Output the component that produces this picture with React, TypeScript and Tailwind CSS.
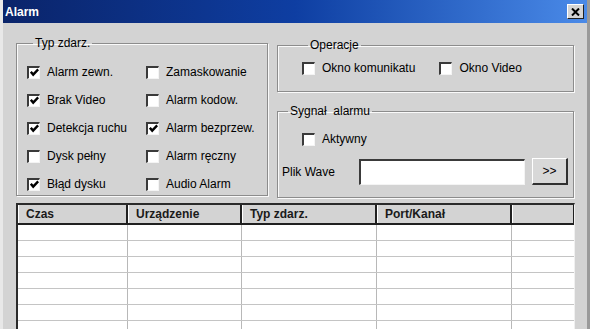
import React from 'react';

const font = { fontFamily: '"Liberation Sans", Arial, sans-serif' };

function Check({ on }: { on?: boolean }) {
  return (
    <span className="w-[13px] h-[13px] shrink-0 bg-white border-t-2 border-l-2 border-b border-r border-t-[#3a3a3a] border-l-[#3a3a3a] border-b-[#f4f4f4] border-r-[#f4f4f4] flex items-center justify-center">
      {on && (
        <svg width="9" height="9" viewBox="0 0 9 9">
          <polyline points="0.8,3.8 3.2,6.6 8.2,1.4" fill="none" stroke="#000" strokeWidth="2.4" />
        </svg>
      )}
    </span>
  );
}

function Item({ label, on }: { label: string; on?: boolean }) {
  return (
    <div className="flex items-center gap-[7px] h-[14px] leading-[14px] whitespace-nowrap">
      <Check on={on} />
      <span>{label}</span>
    </div>
  );
}

function Group({ title, className, children }: { title: string; className: string; children: React.ReactNode }) {
  return (
    <fieldset className={`border border-[#8c8c8c] shadow-[inset_1px_1px_0_#fafafa,1px_1px_0_#fafafa] ${className}`}>
      <legend className="ml-[6px] px-[2px] leading-[14px] whitespace-pre">{title}</legend>
      {children}
    </fieldset>
  );
}

const cols = [112, 114, 135, 135, 63];
const heads = ['Czas', 'Urządzenie', 'Typ zdarz.', 'Port/Kanał', ''];

export default function App() {
  return (
    <div style={font} className="w-[590px] h-[329px] overflow-hidden bg-[#d3d3d3] text-[12px] text-black border-l-[3px] border-r-[3px] border-l-[#e8e8e8] border-r-[#9a9a9a] flex flex-col">
      <div className="h-[23px] shrink-0 bg-gradient-to-r from-[#0a246a] via-[#0e3ea2] to-[#4a8ae8] flex items-center justify-between pl-[2px] pr-[3px]">
        <span className="text-white font-bold text-[12px]">Alarm</span>
        <span className="w-[17px] h-[15px] bg-[#d4d4d4] border border-t-white border-l-white border-b-[#202020] border-r-[#202020] flex items-center justify-center">
          <svg width="9" height="8" viewBox="0 0 9 8">
            <path d="M1 0.5 L8 7.5 M8 0.5 L1 7.5" stroke="#000" strokeWidth="2" />
          </svg>
        </span>
      </div>

      <div className="flex items-start pl-[13px] pr-[13px] mt-[13px] gap-[9px]">
        <Group title="Typ zdarz." className="w-[252px] pl-[10px] pt-[15px] pb-[4px]">
          <div className="grid grid-cols-[119px_1fr] gap-y-[14px]">
            <Item label="Alarm zewn." on />
            <Item label="Zamaskowanie" />
            <Item label="Brak Video" on />
            <Item label="Alarm kodow." />
            <Item label="Detekcja ruchu" on />
            <Item label="Alarm bezprzew." on />
            <Item label="Dysk pełny" />
            <Item label="Alarm ręczny" />
            <Item label="Błąd dysku" on />
            <Item label="Audio Alarm" />
          </div>
        </Group>

        <div className="w-[297px] mt-[2px] flex flex-col gap-[12px]">
          <Group title="Operacje" className="pl-[24px] pt-[9px] pb-[16px]">
            <div className="flex gap-[24px]">
              <Item label="Okno komunikatu" />
              <Item label="Okno Video" />
            </div>
          </Group>
          <Group title="Sygnał  alarmu" className="pl-[4px] pr-[5px] pt-[14px] pb-[12px]">
            <div className="pl-[20px]">
              <Item label="Aktywny" />
            </div>
            <div className="flex items-center mt-[12px]">
              <span className="w-[77px]">Plik Wave</span>
              <div className="w-[166px] h-[26px] bg-white border-t-2 border-l-2 border-b border-r border-t-[#3a3a3a] border-l-[#3a3a3a] border-b-[#f4f4f4] border-r-[#f4f4f4]" />
              <button className="ml-[7px] w-[36px] h-[27px] bg-[#d8d8d8] border border-t-white border-l-white border-b-2 border-r-2 border-b-[#303030] border-r-[#303030] flex items-center justify-center text-[12px]">
                &gt;&gt;
              </button>
            </div>
          </Group>
        </div>
      </div>

      <div className="ml-[13px] mt-[5px] w-[559px] flex-1 bg-white border-t-2 border-l-2 border-t-[#2a2a2a] border-l-[#2a2a2a] border-r border-r-[#f0f0f0] overflow-hidden">
        <div className="flex h-[20px] bg-[#d3d3d3] border-b-2 border-b-[#202020]">
          {heads.map((h, i) => (
            <div
              key={i}
              style={{ width: i === 0 ? cols[i] - 2 : cols[i] }}
              className="shrink-0 border-r-2 border-r-[#202020] border-l border-l-white pl-[7px] leading-[18px] font-bold text-[#1a1a1a]"
            >
              {h}
            </div>
          ))}
        </div>
        {Array.from({ length: 7 }).map((_, r) => (
          <div key={r} className="flex h-[16px] border-b border-b-[#c4c4c4]">
            {cols.map((w, i) => (
              <div key={i} style={{ width: i === 0 ? w - 2 : w }} className="shrink-0 border-r border-r-[#b8b8b8]" />
            ))}
          </div>
        ))}
      </div>
    </div>
  );
}
